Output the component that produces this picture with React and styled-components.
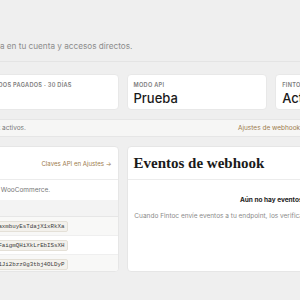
import React from "react";
import styled, { createGlobalStyle } from "styled-components";

const GlobalStyle = createGlobalStyle`
  html, body {
    margin: 0;
    padding: 0;
    background: #efefef;
    overflow: hidden;
  }
  body {
    font-family: Inter, "Noto Sans", sans-serif;
    color: #1c1c1c;
  }
`;

const Page = styled.div`
  width: 587px;
  margin-left: -171px;
`;

const Header = styled.header`
  padding: 41px 0 10px;
  border-bottom: 1px solid #e4e4e4;
`;

const Subtitle = styled.p`
  margin: 0;
  font-size: 8.2px;
  line-height: 10px;
  color: #8c8c8c;
  white-space: nowrap;
`;

const Stats = styled.div`
  display: grid;
  grid-template-columns: repeat(4, 1fr);
  gap: 8px;
  margin-top: 12px;
`;

const StatCard = styled.div`
  background: #fff;
  border: 1px solid #e8e8e8;
  border-radius: 4px;
  padding: 6px 6px 3px;
  box-sizing: border-box;
  height: 36px;
`;

const StatLabel = styled.div`
  font-size: 5.6px;
  line-height: 8px;
  font-weight: 600;
  letter-spacing: 0.3px;
  text-transform: uppercase;
  color: #7a7a7a;
  white-space: nowrap;
`;

const StatValue = styled.div`
  font-size: 13px;
  line-height: 18px;
  font-weight: 500;
  color: #1a1a1a;
  white-space: nowrap;
`;

const Banner = styled.div`
  display: flex;
  justify-content: space-between;
  align-items: center;
  height: 18px;
  margin-top: 9px;
  padding: 0 8px;
  box-sizing: border-box;
  background: #f6f6f5;
  border: 1px solid #e6e6e6;
  border-radius: 3px;
  font-size: 6.5px;
  color: #777;
  white-space: nowrap;
`;

const Link = styled.a`
  color: #9d7b4c;
  text-decoration: none;
  font-size: ${(p) => p.$size || "6.5px"};
  white-space: nowrap;
`;

const Panels = styled.div`
  display: grid;
  grid-template-columns: 1fr 1fr;
  gap: 8px;
  margin-top: 9px;
`;

const Panel = styled.section`
  background: #fff;
  border: 1px solid #e6e6e6;
  border-radius: 4px;
  overflow: hidden;
  height: 126px;
  box-sizing: border-box;
`;

const PanelHead = styled.div`
  display: flex;
  justify-content: space-between;
  align-items: center;
  height: 33px;
  padding: 0 6px;
  box-sizing: border-box;
  border-bottom: 1px solid #ececec;
`;

const PanelTitle = styled.h2`
  margin: 0;
  font-family: "Liberation Serif", "DejaVu Serif", serif;
  font-size: 15px;
  font-weight: 700;
  color: #1a1a1a;
  white-space: nowrap;
`;

const PanelText = styled.p`
  margin: 0;
  padding: 5px 8px 5px;
  font-size: 6.5px;
  line-height: 10px;
  color: #777;
  white-space: nowrap;
`;

const TableHead = styled.div`
  display: flex;
  align-items: center;
  height: 16px;
  padding: 0 8px;
  background: #f3f3f3;
  border-bottom: 1px solid #e6e6e6;
  font-size: 5px;
  font-weight: 600;
  text-transform: uppercase;
  color: #8a8a8a;
`;

const Row = styled.div`
  display: grid;
  grid-template-columns: 1fr auto;
  gap: 8px;
  align-items: center;
  height: 18px;
  padding: 0 50px 0 8px;
  background: ${(p) => (p.$striped ? "#f8f8f7" : "#fff")};
  border-bottom: 1px solid #efefef;
  font-size: 6.5px;
  color: #555;
`;

const Chip = styled.code`
  font-family: "Liberation Mono", "DejaVu Sans Mono", monospace;
  font-size: 5.8px;
  line-height: 9px;
  padding: 0 2px;
  color: #3a3a3a;
  background: #f3f1ec;
  border: 1px solid #e4e0d7;
  border-radius: 2px;
  white-space: nowrap;
`;

const Empty = styled.div`
  padding-top: 15px;
  text-align: center;
`;

const EmptyTitle = styled.div`
  font-size: 6.5px;
  line-height: 10px;
  font-weight: 700;
  color: #1a1a1a;
`;

const EmptyText = styled.div`
  margin-top: 6px;
  font-size: 6.5px;
  line-height: 10px;
  color: #8a8a8a;
  white-space: nowrap;
`;

const keys = [
  { name: "Clave secreta", value: "sk_test_Lm2axmbuyEsTdajX1xRkXa" },
  { name: "Clave pública", value: "pk_test_Qp8FaigmQHiXkLrEbISsXH" },
  { name: "Secreto webhook", value: "whsec_Rt5cA1Ji2bzz0g3tbj4OLDyP" },
];

export default function App() {
  return (
    <>
      <GlobalStyle />
      <Page>
        <Header>
          <Subtitle>
            Resumen de pagos y la actividad de tu tienda en tu cuenta y accesos directos.
          </Subtitle>
        </Header>

        <Stats>
          <StatCard>
            <StatLabel>Pagos recibidos · hoy</StatLabel>
            <StatValue>$0</StatValue>
          </StatCard>
          <StatCard>
            <StatLabel>Pedidos pagados · 30 días</StatLabel>
            <StatValue>0</StatValue>
          </StatCard>
          <StatCard>
            <StatLabel>Modo API</StatLabel>
            <StatValue>Prueba</StatValue>
          </StatCard>
          <StatCard>
            <StatLabel>Fintoc webhooks</StatLabel>
            <StatValue>Activo</StatValue>
          </StatCard>
        </Stats>

        <Banner>
          <span>Estás en modo prueba. Hay 2 endpoints de webhook activos.</span>
          <span>
            <Link href="#">Ajustes de webhooks</Link> · <Link href="#">Eventos</Link> ·{" "}
            <Link href="#">Ver documentación →</Link>
          </span>
        </Banner>

        <Panels>
          <Panel>
            <PanelHead>
              <PanelTitle>Credenciales</PanelTitle>
              <Link href="#" $size="6.1px">Claves API en Ajustes →</Link>
            </PanelHead>
            <PanelText>Estas claves conectan Fintoc con tu tienda online de WooCommerce.</PanelText>
            <TableHead>
              <span>Credencial</span>
            </TableHead>
            {keys.map((k, i) => (
              <Row key={k.name} $striped={i % 2 === 0}>
                <span>{k.name}</span>
                <Chip>{k.value}</Chip>
              </Row>
            ))}
          </Panel>

          <Panel>
            <PanelHead>
              <PanelTitle>Eventos de webhook</PanelTitle>
            </PanelHead>
            <Empty>
              <EmptyTitle>Aún no hay eventos</EmptyTitle>
              <EmptyText>
                Cuando Fintoc envíe eventos a tu endpoint, los verificaremos y verás todo el detalle aquí.
              </EmptyText>
            </Empty>
          </Panel>
        </Panels>
      </Page>
    </>
  );
}
